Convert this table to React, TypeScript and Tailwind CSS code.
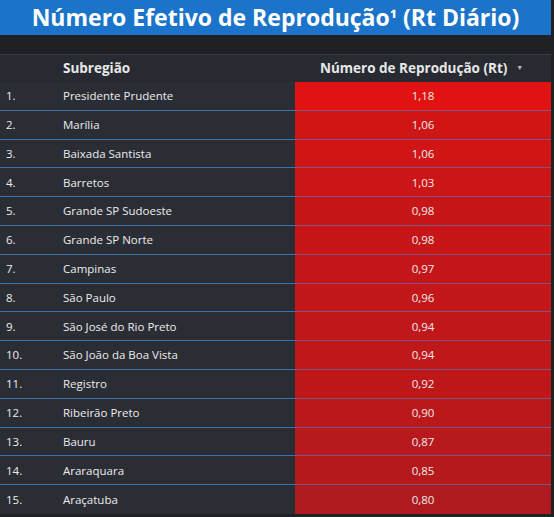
const rows: [string, number][] = [
  ["Presidente Prudente", 1.18],
  ["Marília", 1.06],
  ["Baixada Santista", 1.06],
  ["Barretos", 1.03],
  ["Grande SP Sudoeste", 0.98],
  ["Grande SP Norte", 0.98],
  ["Campinas", 0.97],
  ["São Paulo", 0.96],
  ["São José do Rio Preto", 0.94],
  ["São João da Boa Vista", 0.94],
  ["Registro", 0.92],
  ["Ribeirão Preto", 0.9],
  ["Bauru", 0.87],
  ["Araraquara", 0.85],
  ["Araçatuba", 0.8],
];

// heat colour between the lowest and highest value
function heat(v: number) {
  const t = (v - 0.8) / (1.18 - 0.8);
  const lo = [174, 26, 30];
  const hi = [224, 18, 18];
  const c = lo.map((l, i) => Math.round(l + (hi[i] - l) * t));
  return `rgb(${c[0]}, ${c[1]}, ${c[2]})`;
}

export default function App() {
  return (
    <div className="w-[554px] h-[517px] bg-[#1f2125] overflow-hidden font-['Open_Sans',sans-serif]">
      <div className="w-[551px] h-[35px] bg-[#1b74c9] flex items-center justify-center">
        <h1 className="text-white font-bold text-[23px] leading-none">
          Número Efetivo de Reprodução<span className="text-[19px]">¹</span> (Rt Diário)
        </h1>
      </div>

      <div className="h-[19px]" />

      <div className="w-[551px] bg-[#2b2d35]">
        <div className="flex h-[28px] bg-[#272b31] border-t border-[#363a41] text-[13.5px] font-bold text-[#e8e8e8]">
          <div className="w-[63px]" />
          <div className="w-[232px] flex items-center">Subregião</div>
          <div className="flex-1 flex items-center pl-[25px]">
            <span>Número de Reprodução (Rt)</span>
            <span className="text-[7px] text-[#bbbbbb] ml-[9px]">▼</span>
          </div>
        </div>

        {rows.map(([name, v], i) => (
          <div key={name} className="flex h-[28.8px] text-[11.5px] text-[#ececec]">
            <div className={`w-[63px] pl-[6px] flex items-center ${i < rows.length - 1 ? "border-b border-[rgba(70,135,215,0.75)]" : ""}`}>
              {i + 1}.
            </div>
            <div className={`w-[232px] flex items-center ${i < rows.length - 1 ? "border-b border-[rgba(70,135,215,0.75)]" : ""}`}>
              {name}
            </div>
            <div
              className={`flex-1 flex items-center justify-center ${i < rows.length - 1 ? "border-b border-[rgba(70,135,215,0.55)]" : ""}`}
              style={{ backgroundColor: heat(v) }}
            >
              {v.toFixed(2).replace(".", ",")}
            </div>
          </div>
        ))}
      </div>
    </div>
  );
}
